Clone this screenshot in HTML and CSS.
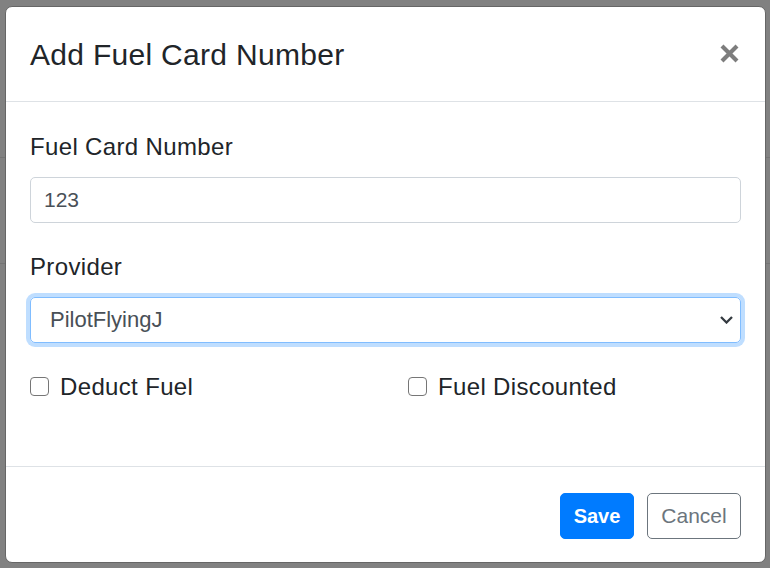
FILE: index.html
```html
<!DOCTYPE html>
<html lang="en">
<head>
<meta charset="utf-8">
<title>Add Fuel Card Number</title>
<link rel="stylesheet" href="styles.css">
</head>
<body>
<div class="modal">
  <div class="modal-header">
    <h5 class="modal-title">Add Fuel Card Number</h5>
    <button class="close" type="button" aria-label="Close">
      <svg width="19" height="19" viewBox="0 0 19 19"><path d="M2 2 L17 17 M17 2 L2 17" stroke="#7d7d7d" stroke-width="4.2" fill="none"/></svg>
    </button>
  </div>
  <div class="modal-body">
    <label class="form-label">Fuel Card Number</label>
    <input class="form-control" type="text" value="123">
    <label class="form-label provider">Provider</label>
    <div class="select">
      <span>PilotFlyingJ</span>
      <svg width="13" height="8" viewBox="0 0 13 8"><path d="M1 1 L6.5 6.5 L12 1" stroke="#343a40" stroke-width="2.3" fill="none"/></svg>
    </div>
    <div class="checks">
      <label class="check"><span class="box"></span>Deduct Fuel</label>
      <label class="check"><span class="box"></span>Fuel Discounted</label>
    </div>
  </div>
  <div class="modal-footer">
    <button class="btn btn-primary" type="button">Save</button>
    <button class="btn btn-outline" type="button">Cancel</button>
  </div>
</div>
</body>
</html>
```
FILE: styles.css
```css
* { box-sizing: border-box; }
html, body { margin: 0; padding: 0; }
body {
  width: 770px;
  height: 568px;
  overflow: hidden;
  font-family: "Liberation Sans", Arial, sans-serif;
  color: #212529;
  background:
    linear-gradient(#747474, #747474) 0 157px / 100% 1px no-repeat,
    linear-gradient(#747474, #747474) 0 263px / 100% 1px no-repeat,
    #818181;
}
.modal {
  margin: 6px 0 0 5px;
  width: 761px;
  height: 557px;
  background: #fff;
  border: 1px solid #666;
  border-radius: 7px;
  display: flex;
  flex-direction: column;
}
.modal-header {
  height: 95px;
  flex: none;
  display: flex;
  align-items: center;
  padding: 0 26px 0 24px;
  border-bottom: 1px solid #dee2e6;
}
.modal-title {
  margin: 0;
  font-size: 30px;
  line-height: 45px;
  font-weight: 400;
  letter-spacing: 0.3px;
  color: #212529;
}
.close {
  margin-left: auto;
  padding: 0;
  border: 0;
  background: none;
  display: flex;
  margin-top: -2px;
}
.modal-body {
  flex: 1;
  padding: 30px 24px 0;
}
.form-label {
  display: block;
  font-size: 24px;
  line-height: 30px;
  letter-spacing: 0.35px;
  margin-bottom: 15px;
  color: #212529;
}
.form-label.provider { margin-top: 29px; }
.form-control {
  display: block;
  width: 100%;
  height: 46px;
  margin: 0;
  border: 1px solid #ced4da;
  border-radius: 5px;
  padding: 0 13px;
  font-family: "Liberation Sans", Arial, sans-serif;
  font-size: 21px;
  color: #495057;
  background: #fff;
  outline: none;
}
.select {
  height: 46px;
  border: 1px solid #80bdff;
  border-radius: 5px;
  box-shadow: 0 0 0 4px rgba(0, 123, 255, 0.25);
  display: flex;
  align-items: center;
  justify-content: space-between;
  padding: 0 7px 0 19px;
  font-size: 22px;
  color: #495057;
}
.checks {
  margin-top: 29px;
  display: grid;
  grid-template-columns: 1fr 1fr;
  column-gap: 45px;
}
.check {
  display: flex;
  align-items: flex-start;
  gap: 11px;
  font-size: 24px;
  line-height: 30px;
  letter-spacing: 0.35px;
  color: #212529;
}
.box {
  width: 19px;
  height: 19px;
  margin-top: 5px;
  border: 1px solid #767676;
  border-radius: 4px;
  background: #fff;
  flex: none;
}
.modal-footer {
  height: 96px;
  flex: none;
  border-top: 1px solid #dee2e6;
  display: flex;
  justify-content: flex-end;
  align-items: flex-start;
  gap: 13px;
  padding: 26px 24px 0;
}
.btn {
  height: 46px;
  border-radius: 5px;
  font-family: "Liberation Sans", Arial, sans-serif;
  font-size: 21px;
  padding: 0;
  cursor: pointer;
}
.btn-primary {
  width: 74px;
  background: #007bff;
  border: 1px solid #007bff;
  color: #fff;
  font-weight: 700;
  font-size: 20px;
}
.btn-outline {
  width: 94px;
  background: #fff;
  border: 1px solid #6c757d;
  color: #6c757d;
}
```
